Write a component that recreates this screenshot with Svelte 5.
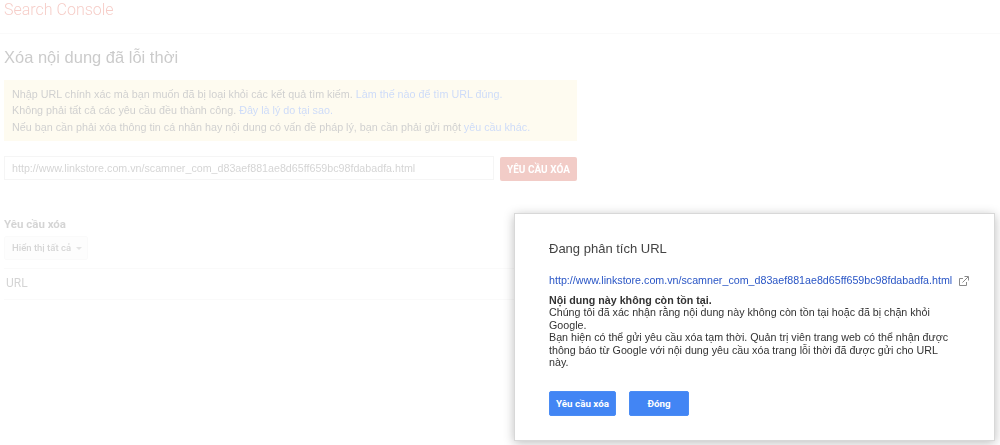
<script>
  const url = 'http://www.linkstore.com.vn/scamner_com_d83aef881ae8d65ff659bc98fdabadfa.html';
</script>

<div class="page">
  <div class="backdrop">
    <header class="topbar">Search Console</header>
    <main class="content">
      <h1>Xóa nội dung đã lỗi thời</h1>
      <div class="notice">
        <p>Nhập URL chính xác mà bạn muốn đã bị loại khỏi các kết quả tìm kiếm. <a href="#a">Làm thế nào để tìm URL đúng.</a></p>
        <p>Không phải tất cả các yêu cầu đều thành công. <a href="#b">Đây là lý do tại sao.</a></p>
        <p>Nếu bạn cần phải xóa thông tin cá nhân hay nội dung có vấn đề pháp lý, bạn cần phải gửi một <a href="#c">yêu cầu khác.</a></p>
      </div>
      <div class="request">
        <div class="field">{url}</div>
        <button class="submit">YÊU CẦU XÓA</button>
      </div>
      <h2>Yêu cầu xóa</h2>
      <div class="filter">Hiển thị tất cả <span class="caret"></span></div>
      <div class="url-row">URL</div>
    </main>
  </div>

  <div class="veil"></div>

  <section class="dialog">
    <h3>Đang phân tích URL</h3>
    <div class="link-row">
      <a href="#d">{url}</a>
      <svg width="11" height="11" viewBox="0 0 11 11" fill="none" stroke="#8a8a8a" stroke-width="1">
        <path d="M5 2.5H1.5v7h7V6" />
        <path d="M4.5 6.5 10 1M6.5 .5H10.5V4.5" />
      </svg>
    </div>
    <div class="body">
      <strong>Nội dung này không còn tồn tại.</strong><br />
      Chúng tôi đã xác nhận rằng nội dung này không còn tồn tại hoặc đã bị chặn khỏi Google.<br />
      Bạn hiện có thể gửi yêu cầu xóa tạm thời. Quản trị viên trang web có thể nhận được thông báo từ Google với nội dung yêu cầu xóa trang lỗi thời đã được gửi cho URL này.
    </div>
    <div class="actions">
      <button class="primary first">Yêu cầu xóa</button>
      <button class="primary second">Đóng</button>
    </div>
  </section>
</div>

<style>
  :global(body) {
    margin: 0;
    background: #fff;
  }
  .page {
    position: relative;
    width: 1000px;
    height: 445px;
    overflow: hidden;
    font-family: "Liberation Sans", Arial, sans-serif;
    color: #333;
  }
  .backdrop {
    filter: blur(0.45px);
  }
  .topbar {
    height: 34px;
    box-sizing: border-box;
    padding: 0 4px;
    line-height: 19px;
    font-family: Roboto, sans-serif;
    font-weight: 300;
    font-size: 16px;
    color: #dd4b39;
    border-bottom: 1px solid #eeeeee;
  }
  .content {
    padding: 0 423px 0 4px;
  }
  h1 {
    margin: 0;
    padding-top: 12px;
    height: 34px;
    line-height: 22px;
    font-size: 16.5px;
    font-weight: 400;
    color: #444;
  }
  .notice {
    box-sizing: border-box;
    height: 61px;
    padding: 6px 8px;
    background: #faf0c8;
    font-size: 10.75px;
    line-height: 16.3px;
    color: #555;
  }
  .notice p {
    margin: 0;
  }
  .notice a {
    color: #4d7fe8;
    text-decoration: none;
  }
  .request {
    display: flex;
    gap: 6px;
    margin-top: 15px;
    height: 24px;
  }
  .field {
    flex: 1;
    box-sizing: border-box;
    border: 1px solid #d9d9d9;
    padding: 0 7px;
    font-size: 10.7px;
    line-height: 22px;
    color: #666;
    white-space: nowrap;
  }
  .submit {
    width: 77px;
    height: 24px;
    margin-top: 1px;
    padding: 0;
    border: 0;
    border-radius: 2px;
    background: #d14836;
    color: #fff;
    font: 700 10px Roboto, sans-serif;
  }
  h2 {
    margin: 36px 0 0;
    height: 20px;
    font: 700 11.5px/16px Roboto, sans-serif;
    color: #666;
  }
  .filter {
    box-sizing: border-box;
    width: 84px;
    height: 24px;
    padding-left: 7px;
    border: 1px solid #eeeeee;
    border-radius: 2px;
    background: #f8f8f8;
    font: 500 9.5px/22px Roboto, sans-serif;
    color: #666;
    white-space: nowrap;
  }
  .caret {
    display: inline-block;
    margin-left: 3px;
    vertical-align: 1px;
    border: 3px solid transparent;
    border-top: 3px solid #999;
    border-bottom: 0;
  }
  .url-row {
    margin-top: 8px;
    box-sizing: border-box;
    height: 32px;
    padding-left: 2px;
    border-top: 1px solid #eeeeee;
    border-bottom: 1px solid #eeeeee;
    font: 400 12px/29px Roboto, sans-serif;
    color: #666;
  }
  .veil {
    position: absolute;
    inset: 0;
    background: rgba(255, 255, 255, 0.72);
  }
  .dialog {
    position: absolute;
    left: 514px;
    top: 213px;
    width: 481px;
    height: 228px;
    box-sizing: border-box;
    padding: 27px 10px 0 34px;
    background: #fff;
    border: 1px solid #d8d8d8;
    box-shadow: 0 2px 10px rgba(0, 0, 0, 0.26);
  }
  h3 {
    margin: 0;
    font-size: 13px;
    line-height: 16px;
    font-weight: 400;
    color: #444;
    filter: blur(0.25px);
  }
  .link-row {
    display: flex;
    align-items: center;
    gap: 6px;
    margin-top: 16px;
    font-size: 10.7px;
    line-height: 14px;
  }
  .link-row a {
    color: #2a56c6;
    text-decoration: none;
    filter: blur(0.25px);
  }
  .link-row svg {
    flex: none;
    margin-top: 2px;
  }
  .body {
    margin-top: 7px;
    width: 405px;
    font-size: 10.7px;
    line-height: 12.4px;
    color: #333;
    filter: blur(0.25px);
  }
  .actions {
    display: flex;
    gap: 13px;
    margin-top: 23px;
  }
  .primary {
    height: 25px;
    padding: 0;
    border: 1px solid #4a8cf5;
    border-radius: 2px;
    background: #4285f4;
    color: #fff;
    font: 700 9.8px Roboto, sans-serif;
  }
  .first {
    width: 67px;
  }
  .second {
    width: 60px;
  }
</style>
